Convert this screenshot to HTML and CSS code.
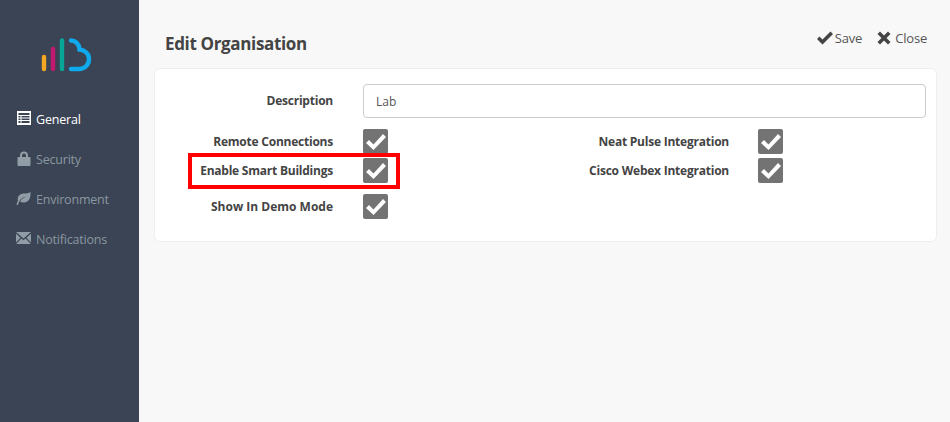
FILE: index.html
```html
<!DOCTYPE html>
<html lang="en">
<head>
<meta charset="utf-8">
<title>Edit Organisation</title>
<link rel="stylesheet" href="styles.css">
</head>
<body>
<div class="app">
  <aside class="sidebar">
    <svg class="logo" viewBox="0 0 52 34" width="52" height="34">
      <g fill="none" stroke-linecap="round" stroke-width="4.400">
        <path d="M3 31V19" stroke="#f5a623"/>
        <path d="M12 31V11" stroke="#c2186f"/>
        <path d="M21 31V2.500" stroke="#08a696"/>
        <path d="M30 2.500c5 .3 8 3.500 8.500 9 5.500 .8 9.500 4.300 9.500 9.500 0 6-4.500 10-10 10h-8" stroke="#0fa9ee"/>
      </g>
    </svg>
    <nav class="nav">
      <a class="nav-item active">
        <svg class="nav-icon" viewBox="0 0 14 14" width="14" height="16"><path fill="#fff" d="M0 0h14v14H0z"/><path fill="#3a4454" d="M1.500 2h11v2h-11zM1.500 5h2v1.500h-2zM4.500 5h8v1.500h-8zM1.500 7.500h2V9h-2zM4.500 7.500h8V9h-8zM1.500 10h2v2h-2zM4.500 10h8v2h-8z"/></svg>
        <span>General</span>
      </a>
      <a class="nav-item">
        <svg class="nav-icon" viewBox="0 0 14 15" width="14" height="15"><path fill="#919da6" d="M3 6V4.500a4 4 0 0 1 8 0V6h1.500a1 1 0 0 1 1 1v7a1 1 0 0 1-1 1h-11a1 1 0 0 1-1-1V7a1 1 0 0 1 1-1zm2 0h4V4.500a2 2 0 0 0-4 0z"/></svg>
        <span>Security</span>
      </a>
      <a class="nav-item">
        <svg class="nav-icon wide" viewBox="0 0 15 14" width="15" height="16"><path fill="#919da6" d="M14.500 1c.3 5-1 10-6 10.500-2 .2-3.500-.2-4.500-1C5.500 8 8 6.500 10.500 5.500 7.500 6 4.500 7.500 3 11c-.4 1-.8 2-1 3H.5c.1-1.500.7-3 1.500-4.300C.8 6 3.500 2.800 7.500 2.500c3-.2 5.500 0 7-1.500z"/></svg>
        <span>Environment</span>
      </a>
      <a class="nav-item">
        <svg class="nav-icon wide" viewBox="0 0 15 14" width="15" height="16"><path fill="#919da6" d="M0 1h15L7.500 7.500zM0 2.800l4.500 3.900L0 11.500zM15 2.800v8.700l-4.500-4.800zM5.400 7.500l2.100 1.800 2.100-1.800 5.200 5.500H.2z"/></svg>
        <span>Notifications</span>
      </a>
    </nav>
  </aside>
  <main class="main">
    <header class="head">
      <h1 class="title">Edit Organisation</h1>
      <div class="actions">
        <a class="action">
          <svg viewBox="0 0 16 14" width="16" height="14"><path fill="#444" d="M0 8l2.500-2.500 3 3L13.500 0.500 16 3 5.500 13.500z"/></svg>
          <span>Save</span>
        </a>
        <a class="action close">
          <svg viewBox="0 0 14 14" width="14" height="14"><path fill="#444" d="M3 .5L7 4.500 11 .5 13.500 3 9.500 7l4 4-2.500 2.500-4-4-4 4L.5 11l4-4-4-4z"/></svg>
          <span>Close</span>
        </a>
      </div>
    </header>
    <section class="card">
      <div class="desc-row">
        <label class="label desc-label">Description</label>
        <input class="input" type="text" value="Lab">
      </div>
      <div class="checks">
        <div class="check-row"><span class="label">Remote Connections</span><span class="box"><svg viewBox="0 0 20 18" width="20" height="18"><path fill="#fff" d="M0 10l3-3 4.500 4.500L17 1l3 3L7.500 17z"/></svg></span></div>
        <div class="check-row col2"><span class="label">Neat Pulse Integration</span><span class="box"><svg viewBox="0 0 20 18" width="20" height="18"><path fill="#fff" d="M0 10l3-3 4.500 4.500L17 1l3 3L7.500 17z"/></svg></span></div>
        <div class="check-row"><span class="label">Enable Smart Buildings</span><span class="box"><svg viewBox="0 0 20 18" width="20" height="18"><path fill="#fff" d="M0 10l3-3 4.500 4.500L17 1l3 3L7.500 17z"/></svg></span></div>
        <div class="check-row col2"><span class="label">Cisco Webex Integration</span><span class="box"><svg viewBox="0 0 20 18" width="20" height="18"><path fill="#fff" d="M0 10l3-3 4.500 4.500L17 1l3 3L7.500 17z"/></svg></span></div>
        <div class="check-row demo"><span class="label demo-label">Show In Demo Mode</span><span class="box"><svg viewBox="0 0 20 18" width="20" height="18"><path fill="#fff" d="M0 10l3-3 4.500 4.500L17 1l3 3L7.500 17z"/></svg></span></div>
      </div>
    </section>
  </main>
</div>
<div class="highlight"></div>
</body>
</html>
```
FILE: styles.css
```css
* { box-sizing: border-box; }
html, body { margin: 0; height: 100%; }
body {
  font-family: "Open Sans", "Noto Sans", sans-serif;
  font-size: 13px;
  color: #444;
  background: #f8f8f8;
  overflow: hidden;
}
.app { display: flex; height: 422px; }
.sidebar {
  width: 139px;
  flex: none;
  background: #3a4454;
  padding-top: 38px;
}
.logo { display: block; margin-left: 41px; }
.nav { display: flex; flex-direction: column; margin-top: 27px; }
.nav-item {
  height: 40px;
  display: flex;
  align-items: center;
  gap: 5px;
  padding-left: 17px;
  color: #8a97a0;
  font-size: 12.500px;
  letter-spacing: -0.2px;
}
.nav-item.active { color: #fff; }
.nav-icon { flex: none; margin-top: -2px; }
.nav-icon.wide { margin-left: -1px; }
.main { flex: 1; padding: 0 13px 0 15px; min-width: 0; }
.head {
  height: 68px;
  display: flex;
  justify-content: space-between;
  padding: 32px 10px 0 11px;
}
.title { margin: 0; font-size: 17px; font-weight: 700; line-height: 24px; color: #444; letter-spacing: -0.35px; }
.actions { display: flex; gap: 15px; margin-top: -4px; height: 20px; }
.action { display: flex; align-items: center; gap: 2px; color: #555; font-size: 13px; line-height: 20px; letter-spacing: -0.2px; }
.action.close { gap: 4px; }
.card {
  height: 174px;
  background: #fff;
  border: 1px solid #eee;
  border-radius: 6px;
  padding: 15px 10px 0 0;
}
.desc-row { display: flex; align-items: center; height: 34px; }
.label {
  width: 178px;
  flex: none;
  text-align: right;
  font-size: 12px;
  font-weight: 700;
  color: #444;
  white-space: nowrap;
  letter-spacing: -0.23px;
}
.desc-label { padding-bottom: 2px; }
.demo-label { letter-spacing: 0; }
.input {
  flex: 1;
  height: 34px;
  margin-left: 30px;
  padding: 0 12px;
  border: 1px solid #ccc;
  border-radius: 4px;
  background: #fff;
  font: 12px "Open Sans", "Noto Sans", sans-serif;
  color: #555;
}
.checks {
  display: grid;
  grid-template-columns: 395px 1fr;
  grid-template-rows: 25px 25px 25px;
  row-gap: 4px;
  margin-top: 11px;
}
.check-row { display: flex; align-items: center; height: 25px; }
.check-row.demo { margin-top: 7px; }
.box {
  width: 25px;
  height: 25px;
  margin-left: 30px;
  flex: none;
  background: #737373;
  border-radius: 2px;
  display: flex;
  align-items: center;
  justify-content: center;
}
.check-row.col2 .label { width: 179px; }
.check-row.col2 .box { margin-left: 29px; }
.highlight {
  position: absolute;
  left: 188px;
  top: 153px;
  width: 212px;
  height: 36px;
  border: 4px solid #f00;
}
```
